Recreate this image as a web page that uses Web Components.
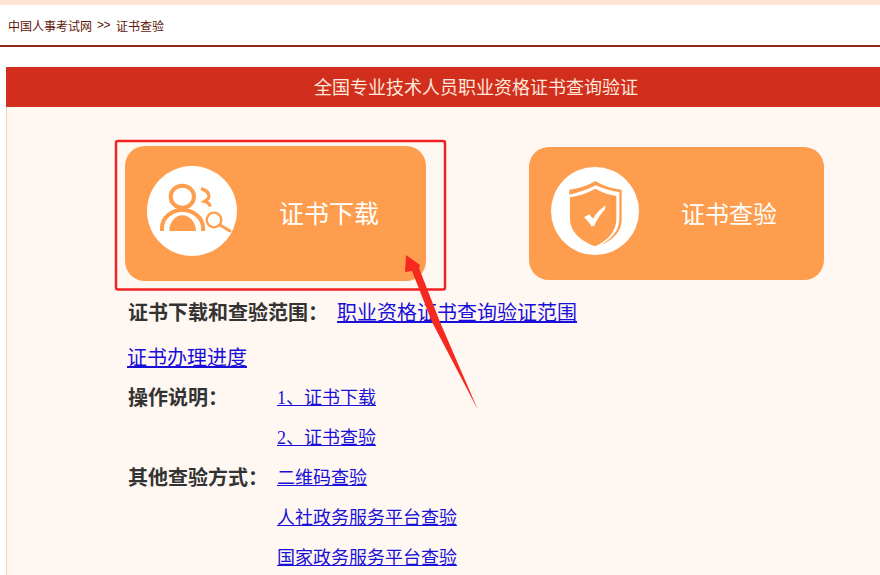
<!DOCTYPE html>
<html lang="zh"><head><meta charset="utf-8"><style>
html,body{margin:0;height:575px;overflow:hidden;background:#fff;font-family:"Noto Sans CJK SC",sans-serif}
</style></head><body>
<cert-page></cert-page>
<script>
const CJK='"Noto Sans CJK SC",sans-serif';
const SERIF='"Liberation Serif","Noto Sans CJK SC",serif';
const def=(n,html)=>customElements.define(n,class extends HTMLElement{constructor(){super();this.attachShadow({mode:'open'}).innerHTML=html}});

def('cert-crumbs',`<style>
:host{display:block;border-top:5px solid #fde3d3;border-bottom:2px solid #8f2a1a;background:#fff}
div{display:flex;align-items:center;height:40px;padding-left:8px;font:12px ${CJK};color:#5e1408}
i{font:normal 12px "Liberation Sans",sans-serif;margin:0 6px 0 5px;letter-spacing:-.5px}
</style><div>中国人事考试网<i>&gt;&gt;</i>证书查验</div>`);

def('cert-bar',`<style>
:host{display:block;height:40px;padding-left:66px;background:#d22e1e;color:#fde8da;text-align:center;font:18px/39px ${CJK}}
</style><slot></slot>`);

def('cert-card',`<style>
:host{display:flex;align-items:center;gap:43px;box-sizing:border-box;padding:0 0 2px 22px;background:#fe9d4e;border-radius:20px;color:#fff;font:24px ${CJK}}
::slotted(svg){flex:none;display:block;margin-bottom:3px}
</style><slot name="icon"></slot><slot></slot>`);

def('cert-row',`<style>
:host{display:flex;align-items:center;height:40px;padding-left:121px;font:18px ${SERIF}}
.l{flex:none;font:bold 20px ${CJK};color:#333;width:149px}
:host([head]) .l{width:auto;margin-right:9px}
:host([flush]) .l{display:none}
::slotted(a){color:#1a0fd8;text-decoration:underline}
</style><span class="l"><slot name="label"></slot></span><slot></slot>`);

def('cert-page',`<style>
:host{display:block;position:relative;width:880px;height:575px;overflow:hidden;background:#fff}
main{display:block;margin:20px 0 0 6px;height:508px;background:#fff8f2;border-left:1px solid #f0d5c2;box-sizing:border-box}
cert-bar{margin-left:-1px}
.cards{display:flex;align-items:center;height:134px;margin-top:39px;padding-left:118px;gap:103px}
.a{width:301px;height:135px;font-size:25px;gap:42px}
.b{width:295px;height:133px;gap:42px}
.rows{margin-top:11px}
.big{font-size:20px;font-family:${CJK}}
.prog{margin-top:5px;padding-left:120px}
.annot{position:absolute;left:0;top:0;width:880px;height:575px;pointer-events:none}
</style>
<cert-crumbs></cert-crumbs>
<main>
<cert-bar>全国专业技术人员职业资格证书查询验证</cert-bar>
<div class="cards">
<cert-card class="a">
<svg slot="icon" width="90" height="90" viewBox="21 18 270 270" aria-hidden="true">
<circle cx="156" cy="153" r="135" fill="#fff"/>
<g fill="none" stroke="#fe9d4e" stroke-linecap="butt">
<ellipse cx="127" cy="110" rx="35" ry="33" stroke-width="12"/>
<path d="M66 213v-9c0-30 27-54 61-54s62 24 62 54v9" stroke-width="12"/>
<path d="M183 86c14 4 24 13 24 24-1 8-8 11-13 14 8 2 15 7 16 16" stroke-width="10"/>
<circle cx="222" cy="180" r="22" stroke-width="7"/>
<path d="M240 195l30 18" stroke-width="9" stroke-linecap="round"/>
</g>
<path d="M88 213c0-26 17-47 39-47s41 21 41 47z" fill="#fe9d4e"/>
</svg>
证书下载</cert-card>
<cert-card class="b">
<svg slot="icon" width="88" height="88" viewBox="18 19 264 264" aria-hidden="true">
<circle cx="150" cy="151" r="132" fill="#fff"/>
<path d="M73 102V87c28-3 55-12 78-26 22 14 49 23 79 26v88c0 36-22 60-60 77 26-18 53-38 53-77V94c-24-3-50-10-71-20-21 11-49 21-79 28z" fill="#fe9d4e"/>
<path d="M75 110c27-4 53-13 76-26 20 11 42 19 63 22v69c0 38-27 66-64 82-42-16-75-44-75-82z" fill="#fe9d4e"/>
<path d="M117 170l16-9 11 13c10-17 24-30 38-40l-3 13c-12 13-24 31-32 49l-8 1c-6-11-14-20-22-27z" fill="#fff"/>
</svg>
证书查验</cert-card>
</div>
<div class="rows">
<cert-row head><span slot="label">证书下载和查验范围：</span><a class="big" href="#">职业资格证书查询验证范围</a></cert-row>
<cert-row flush class="prog"><a class="big" href="#">证书办理进度</a></cert-row>
<cert-row><span slot="label">操作说明：</span><a href="#">1、证书下载</a></cert-row>
<cert-row><a href="#">2、证书查验</a></cert-row>
<cert-row><span slot="label">其他查验方式：</span><a href="#">二维码查验</a></cert-row>
<cert-row><a href="#">人社政务服务平台查验</a></cert-row>
<cert-row><a href="#">国家政务服务平台查验</a></cert-row>
</div>
</main>
<svg class="annot" viewBox="0 0 880 575" aria-hidden="true">
<rect x="116" y="141" width="329" height="148.500" rx="2" fill="none" stroke="#ee2222" stroke-width="2.500"/>
<path d="M406 255L420 265 419 268 440 322 478 410 432 322 412 271 405 272z" fill="#f5291f"/>
</svg>`);
</script></body></html>
